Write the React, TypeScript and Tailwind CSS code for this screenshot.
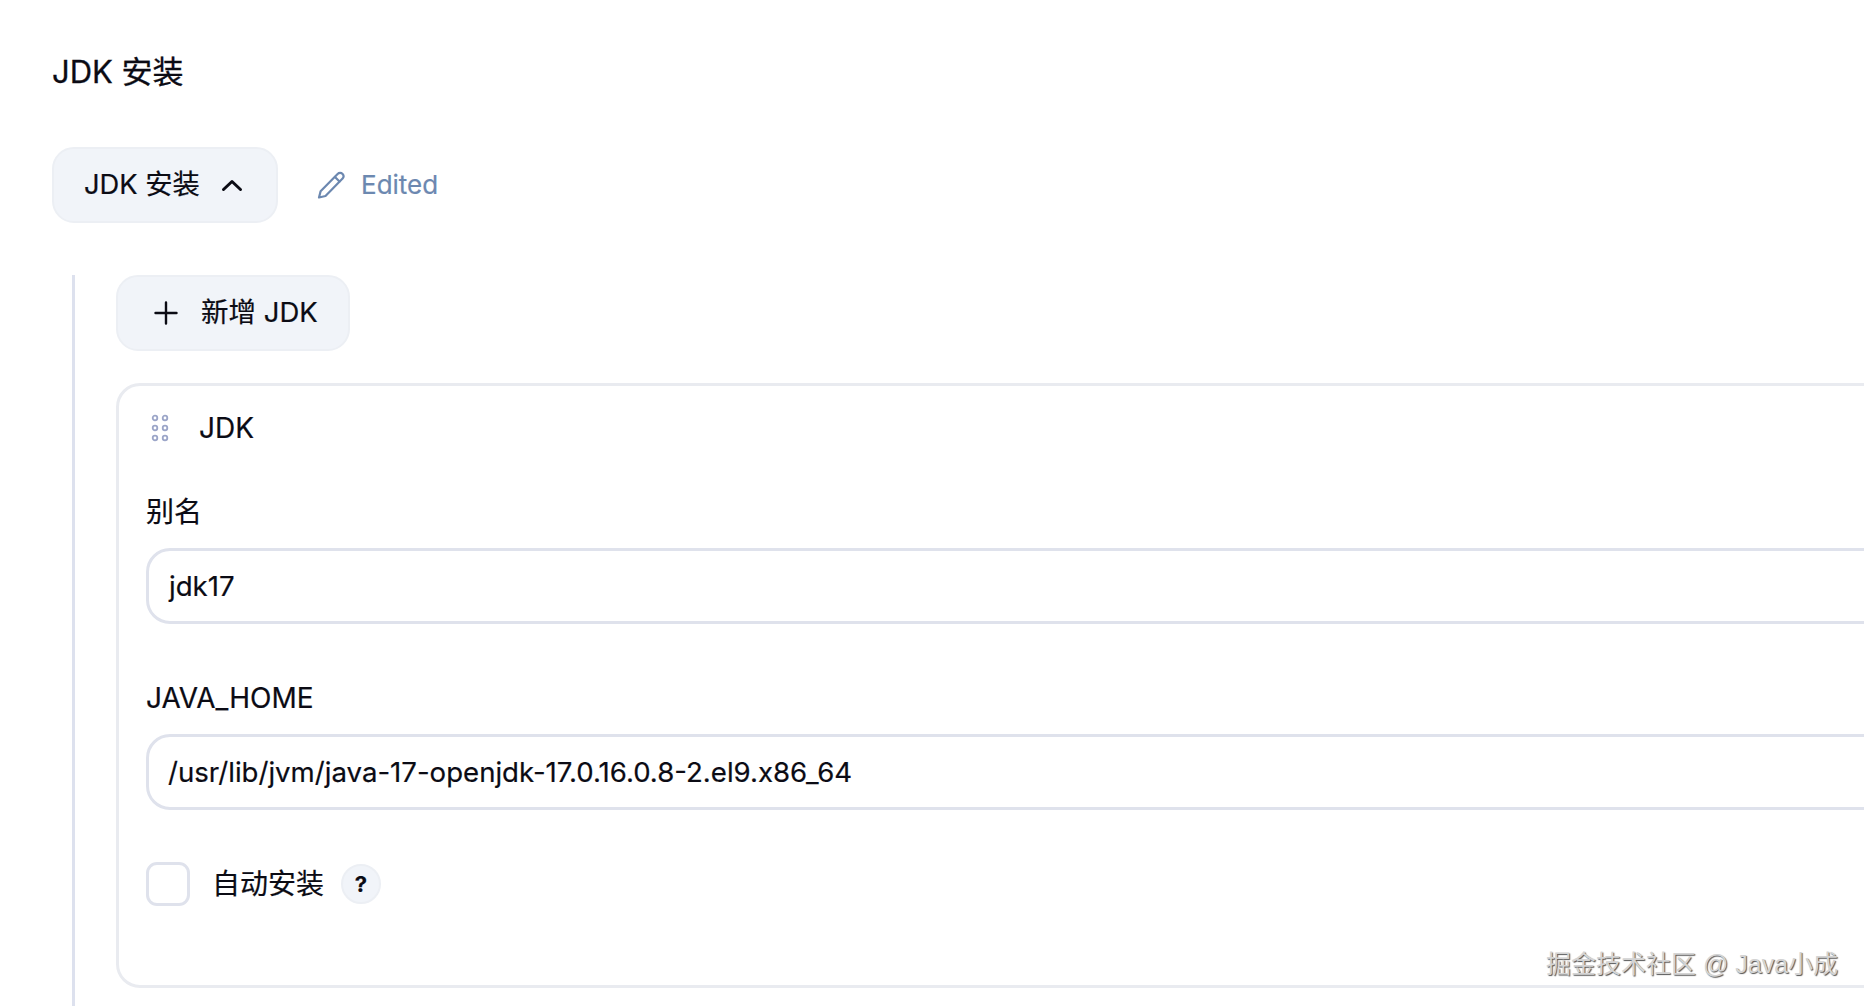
import React from "react";

export default function App() {
  return (
    <div className="relative h-[1006px] w-[1864px] overflow-hidden bg-white font-['Inter','Noto_Sans_CJK_SC',sans-serif] text-[#0b0b14] [-webkit-text-stroke:0.2px]">
      <div className="pl-[52px] pt-[50px]">
        <h1 className="text-[31px] leading-[44px] font-normal [-webkit-text-stroke:0.3px_#0b0b14]">JDK 安装</h1>
        <div className="mt-[53px] flex items-center">
          <button className="flex h-[76px] w-[226px] items-center rounded-[22px] border-2 border-[#eceff4] bg-[#f1f4f9] pl-[30px] text-[27.3px] leading-none">
            <span>JDK 安装</span>
            <svg className="ml-[21px]" width="22" height="14" viewBox="0 0 22 14" fill="none" stroke="#0b0b14" strokeWidth="3" strokeLinecap="round" strokeLinejoin="round"><path d="M2.5 11.5 11 3.5l8.5 8" /></svg>
          </button>
          <svg className="ml-[39px]" width="28" height="28" viewBox="0 0 28 28" fill="none" stroke="#6c88b0" strokeWidth="2.2" strokeLinecap="round" strokeLinejoin="round"><path d="M2 26.5l1.6-6.3L20.6 3a3.5 3.5 0 0 1 5 0 3.5 3.5 0 0 1 0 4.6L8.5 25z" /><path d="M18 6l4.5 4.5" /></svg>
          <span className="ml-[16px] text-[26px] leading-none text-[#6c88b0]">Edited</span>
        </div>
        <div className="ml-[20px] mt-[52px] h-[800px] border-l-[3px] border-[#dde1ee] pl-[41px]">
          <button className="flex h-[76px] w-[234px] items-center rounded-[22px] border-2 border-[#eceff4] bg-[#f1f4f9] pl-[36px] text-[27.5px] leading-none">
            <svg width="24" height="24" viewBox="0 0 24 24" fill="none" stroke="#0b0b14" strokeWidth="2.4" strokeLinecap="round"><path d="M12 1.5v21M1.5 12h21" /></svg>
            <span className="ml-[23px]">新增 JDK</span>
          </button>
          <div className="mt-[32px] h-[605px] w-[1900px] rounded-[24px] border-[3px] border-[#e9ebf0] pl-[27px]">
            <div className="flex h-[84px] items-center">
              <svg width="18" height="28" viewBox="0 0 18 28" fill="none" stroke="#9ba5c8" strokeWidth="1.8" className="ml-[5px]">
                <circle cx="4" cy="4" r="2.3" /><circle cx="14" cy="4" r="2.3" />
                <circle cx="4" cy="14" r="2.3" /><circle cx="14" cy="14" r="2.3" />
                <circle cx="4" cy="24" r="2.3" /><circle cx="14" cy="24" r="2.3" />
              </svg>
              <span className="ml-[30px] text-[28px] leading-none">JDK</span>
            </div>
            <div className="mt-[22px] text-[28px] leading-[40px]">别名</div>
            <div className="mt-[16px] flex h-[76px] items-center rounded-[24px] border-[3px] border-[#dfe2ec] pl-[20px] text-[27.6px]"><span className="translate-y-px">jdk17</span></div>
            <div className="mt-[54px] text-[28px] leading-[40px]">JAVA_HOME</div>
            <div className="mt-[16px] flex h-[76px] items-center rounded-[24px] border-[3px] border-[#dfe2ec] pl-[19px] text-[27.6px]"><span className="translate-y-px">/usr/lib/jvm/java-17-openjdk-17.0.16.0.8-2.el9.x86_64</span></div>
            <div className="mt-[52px] flex items-center">
              <div className="h-[44px] w-[44px] rounded-[11px] border-[3px] border-[#dfe2ec]" />
              <span className="ml-[22px] text-[28px] leading-none">自动安装</span>
              <span className="ml-[17px] flex h-[40px] w-[40px] items-center justify-center rounded-full border-2 border-[#eceff4] bg-[#f1f4f9] text-[22px] font-bold leading-none">?</span>
            </div>
          </div>
        </div>
      </div>
      <div className="absolute left-[1546px] top-[947px] text-[25px] leading-[34px] text-[#d4d4d4] [-webkit-text-stroke:0px] [text-shadow:1px_1px_1px_#555] font-['Liberation_Sans','Noto_Sans_CJK_SC',sans-serif]">掘金技术社区 @ Java小成</div>
    </div>
  );
}
